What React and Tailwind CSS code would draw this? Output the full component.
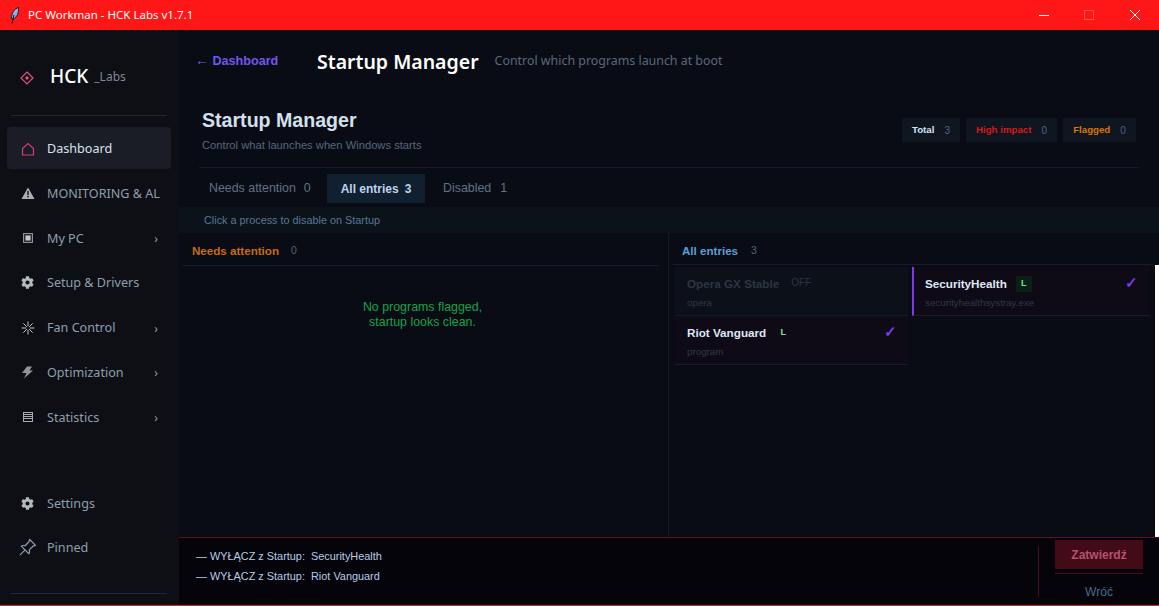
import { FaCog } from 'react-icons/fa';
import { BsPinAngle } from 'react-icons/bs';

const HomeIcon = () => (
  <svg width="14" height="14" viewBox="0 0 14 14" fill="none" stroke="#d63a78" strokeWidth="1.2">
    <path d="M1.5 13V6.5L7 1.5l5.5 5V13z" />
  </svg>
);
const WarnIcon = () => (
  <svg width="14" height="12" viewBox="0 0 14 12">
    <path d="M7 0.5L13.5 12H0.5z" fill="#a8afb8" />
    <rect x="6.3" y="4" width="1.4" height="4.2" fill="#0d0f14" />
    <rect x="6.3" y="9" width="1.4" height="1.4" fill="#0d0f14" />
  </svg>
);
const ChipIcon = () => (
  <svg width="10" height="10" viewBox="0 0 10 10">
    <rect x="0" y="0" width="10" height="10" fill="#8a929c" />
    <rect x="1" y="1" width="8" height="8" fill="#2a2d33" />
    <rect x="2.5" y="2.5" width="5" height="5" fill="#c4c9d0" />
  </svg>
);
const FanIcon = () => (
  <svg width="14" height="14" viewBox="0 0 12 12" stroke="#d0d5dc" strokeWidth="0.8" fill="none">
    <path d="M6 0.5V4.5M6 7.5v4M0.5 6H4.5M7.5 6h4M2 2l3 3M7 7l3 3M10 2L7 5M5 7L2 10" />
  </svg>
);
const BoltIcon = () => (
  <svg width="13" height="13" viewBox="0 0 13 13">
    <path d="M6 0.5h5L8.5 4.5H12L3 12.5l2.5-5.5H1z" fill="#8d949e" />
  </svg>
);
const ListIcon = () => (
  <svg width="10" height="10" viewBox="0 0 10 10" stroke="#a4abb5" strokeWidth="1" fill="none">
    <rect x="0.5" y="0.5" width="9" height="9" />
    <path d="M0 2.5h10M0 4.5h10M0 6.5h10" />
  </svg>
);

const navItems = [
  { label: 'Dashboard', icon: <HomeIcon />, active: true },
  { label: 'MONITORING & AL', icon: <WarnIcon /> },
  { label: 'My PC', icon: <ChipIcon />, arrow: true },
  { label: 'Setup & Drivers', icon: <FaCog size={13} color="#b4bac2" /> },
  { label: 'Fan Control', icon: <FanIcon />, arrow: true },
  { label: 'Optimization', icon: <BoltIcon />, arrow: true },
  { label: 'Statistics', icon: <ListIcon />, arrow: true },
];

function NavRow({ item }) {
  return (
    <div className={`h-[42px] mb-[2.8px] flex items-center rounded-sm ${item.active ? 'bg-[#1a1d26] text-[#dbe3ec]' : 'text-[#8d9fb0]'}`}>
      <span className="w-[40px] flex justify-center pl-[1px] pt-[2px]">{item.icon}</span>
      <span className="flex-1 pt-[4px] text-[12.6px] whitespace-nowrap overflow-hidden">{item.label}</span>
      {item.arrow && <span className="text-[12px] text-[#8d9fb0] pr-[13px] pt-[4px]">›</span>}
    </div>
  );
}

function Badge({ label, value, color, w }) {
  return (
    <div className={`h-[24px] bg-[#0f1620] flex items-center justify-center gap-[10px] text-[9.7px] font-bold ${w}`}>
      <span className={color}>{label}</span>
      <span className="font-normal text-[10px] text-[#4f6480]">{value}</span>
    </div>
  );
}

function Entry({ name, sub, tag, on, selected, off }) {
  return (
    <div className={`h-[49px] border-b pl-[12px] pr-[12px] flex flex-col relative ${off ? 'bg-[#0c1018] border-[#141b25]' : 'bg-[#0e0a16] border-[#171c28]'} ${selected ? 'border-l-2 border-l-[#7c3aed] pl-[11px]' : ''}`}>
      <div className="flex items-center h-[30px] pt-[3px]">
        <span className={`text-[11.7px] font-bold ${selected ? '-ml-[1px]' : ''} ${off ? 'text-[#2c3644]' : 'text-[#dfe8f4]'}`}>{name}</span>
        {off && <span className="ml-[12px] text-[10px] text-[#2c3644] -mt-[2px]">OFF</span>}
        {tag && (
          <span className={`ml-[9px] w-[16px] h-[16px] flex items-center justify-center text-[9px] font-bold text-[#6ee787] ${selected ? 'bg-[#0b2014]' : ''}`}>L</span>
        )}
        {on && <span className="ml-auto -mr-[1px] text-[15px] font-bold text-[#7c3aed]">✓</span>}
      </div>
      <span className={`text-[9.8px] text-[#2f3947] -mt-[1px] ${selected ? '-ml-[1px]' : ''}`}>{sub}</span>
    </div>
  );
}

export default function App() {
  return (
    <div className="w-[1159px] h-[606px] overflow-hidden flex flex-col bg-[#090c14] font-['Liberation_Sans',sans-serif]">
      {/* Title bar */}
      <div className="h-[30px] shrink-0 bg-[#ff1616] flex items-center text-white font-['Noto_Sans',sans-serif]">
        <svg className="ml-[10px]" width="10" height="17" viewBox="0 0 10 17">
          <path d="M8.5 0.5C4 2 1.5 6 1.5 11.5l2 0.5C7 10 9 6 8.5 0.5z" fill="#7fb4ee" stroke="#10131a" strokeWidth="0.9" />
          <path d="M2 16.5L4 8" stroke="#10131a" strokeWidth="1" />
        </svg>
        <span className="ml-[8px] text-[11.5px]">PC Workman - HCK Labs v1.7.1</span>
        <div className="ml-auto flex items-center">
          <span className="w-[10px] h-[1px] bg-white mr-[35px]" />
          <span className="w-[10px] h-[10px] border border-[#ff5050] mr-[36px]" />
          <svg className="mr-[19px]" width="10" height="10" viewBox="0 0 10 10" stroke="#fff" strokeWidth="1">
            <path d="M0 0l10 10M10 0L0 10" />
          </svg>
        </div>
      </div>

      <div className="flex-1 flex min-h-0">
        {/* Sidebar */}
        <aside className="w-[179px] shrink-0 bg-[#0d0f14] pl-[7px] pr-[8px] flex flex-col font-['Noto_Sans',sans-serif]">
          <div className="h-[86px] shrink-0 border-b border-[#23262e] mx-[4px] flex items-center">
            <svg className="ml-[9px] mt-[10px]" width="14" height="14" viewBox="0 0 14 14" fill="none">
              <path d="M7 1l6 6-6 6-6-6z" stroke="#e0508f" strokeWidth="1.2" />
              <path d="M7 5l2 2-2 2-2-2z" fill="#ef5a5a" />
            </svg>
            <span className="ml-[16px] mt-[8px] text-[19px] font-medium text-white">HCK</span>
            <span className="ml-[6px] mt-[9px] text-[12px] text-[#7f8a98]">_Labs</span>
          </div>
          <nav className="mt-[10.5px]">
            {navItems.map((item) => (
              <NavRow key={item.label} item={item} />
            ))}
          </nav>
          <div className="mt-[41px]">
            <NavRow item={{ label: 'Settings', icon: <FaCog size={13} color="#b4bac2" /> }} />
            <NavRow item={{ label: 'Pinned', icon: <BsPinAngle size={19} color="#8d9fb0" /> }} />
          </div>
          <div className="mt-[22px] border-b border-[#1f2a38] mx-[4px]" />
        </aside>

        {/* Main */}
        <main className="flex-1 min-w-0 flex flex-col">
          <div className="h-[507px] flex flex-col">
            <div className="h-[63px] shrink-0 flex items-center pl-[16px]">
              <span className="w-[122px] text-[12.6px] font-bold text-[#7356ef] -mt-[3px]">
                <span className="font-normal text-[14px]">←</span> Dashboard
              </span>
              <span className="text-[19.5px] mt-[1px] font-semibold text-white font-['Noto_Sans',sans-serif]">Startup Manager</span>
              <span className="ml-[16px] text-[12.4px] text-[#5b6878] font-['Noto_Sans',sans-serif]">Control which programs launch at boot</span>
            </div>

            <div className="mx-[20px] h-[75px] shrink-0 border-b border-[#161c26] flex justify-between pl-[3px] pr-[3px]">
              <div className="pt-[15px]">
                <div className="text-[19.6px] font-bold leading-[24px] text-[#d5e0ee]">Startup Manager</div>
                <div className="text-[11.2px] leading-[14px] mt-[6px] text-[#55677e]">Control what launches when Windows starts</div>
              </div>
              <div className="flex gap-[6px] mt-[25px]">
                <Badge label="Total" value="3" color="text-[#d5e4f5]" w="w-[58px]" />
                <Badge label="High impact" value="0" color="text-[#d11c1c]" w="w-[91px]" />
                <Badge label="Flagged" value="0" color="text-[#d97706]" w="w-[73px]" />
              </div>
            </div>

            <div className="h-[29px] mt-[6px] shrink-0 ml-[18px] flex text-[12.4px] text-[#5f7286]">
              <span className="w-[130px] flex items-center pl-[12px] gap-[8px]">Needs attention <span>0</span></span>
              <span className="w-[98px] bg-[#10202f] text-[#bcd4ec] font-bold text-[12px] flex items-center justify-center gap-[6px]">All entries <span>3</span></span>
              <span className="flex items-center pl-[18px] gap-[9px]">Disabled <span>1</span></span>
            </div>

            <div className="h-[26px] mt-[4px] shrink-0 bg-[#0b121a] flex items-center pl-[25px] text-[10.85px] text-[#5a7795]">
              Click a process to disable on Startup
            </div>

            <div className="flex-1 flex min-h-0">
              <section className="w-[490px] shrink-0 border-r border-[#141a24] px-[3px]">
                <div className="h-[33px] pt-[3px] border-b border-[#161c26] flex items-center gap-[12px] pl-[10px] pr-[6px] mr-[6px] text-[11.6px]">
                  <span className="font-bold text-[#c96a0c]">Needs attention</span>
                  <span className="text-[#50647e] text-[10.5px]">0</span>
                </div>
                <div className="mt-[34px] pr-[2px] text-center text-[12.4px] leading-[15px] text-[#16a34a]">
                  No programs flagged,
                  <br />
                  startup looks clean.
                </div>
              </section>
              <section className="flex-1 flex min-w-0">
                <div className="flex-1 min-w-0">
                  <div className="h-[32px] pt-[4px] border-b border-[#161c26] mx-[4px] flex items-center gap-[13px] pl-[9px] text-[11.6px]">
                    <span className="font-bold text-[#5f9fd6]">All entries</span>
                    <span className="text-[#50647e] text-[10.5px]">3</span>
                  </div>
                  <div className="grid grid-cols-[233px_237px] gap-x-[4px] pl-[6px] mt-[2px]">
                    <Entry name="Opera GX Stable" sub="opera" off />
                    <Entry name="SecurityHealth" sub="securityhealthsystray.exe" tag on selected />
                    <Entry name="Riot Vanguard" sub="program" tag on />
                  </div>
                </div>
                <div className="w-[4px] mt-[32px] bg-white shrink-0" />
              </section>
            </div>
          </div>

          {/* Footer */}
          <div className="flex-1 bg-[#05040a] border-t border-[#5a1024] flex">
            <div className="flex-1 pl-[17px] pt-[8px] text-[10.9px] leading-[20px] text-[#b8cde4]">
              <div>— WYŁĄCZ z Startup:&nbsp; SecurityHealth</div>
              <div>— WYŁĄCZ z Startup:&nbsp; Riot Vanguard</div>
            </div>
            <div className="w-[1px] h-[51px] mt-[8px] bg-[#4a0d1e]" />
            <div className="w-[88px] ml-[16px] mr-[16px] pt-[2px]">
              <div className="h-[29px] bg-[#430a18] flex items-center justify-center text-[12px] font-bold text-[#b5526f]">Zatwierdź</div>
              <div className="h-[5px] border-b border-[#4a0d1e]" />
              <div className="text-center text-[12px] mt-[9px] text-[#4b6b8f]">Wróć</div>
            </div>
          </div>
        </main>
      </div>
      <div className="h-[1px] shrink-0 bg-[#e02020]" />
    </div>
  );
}
